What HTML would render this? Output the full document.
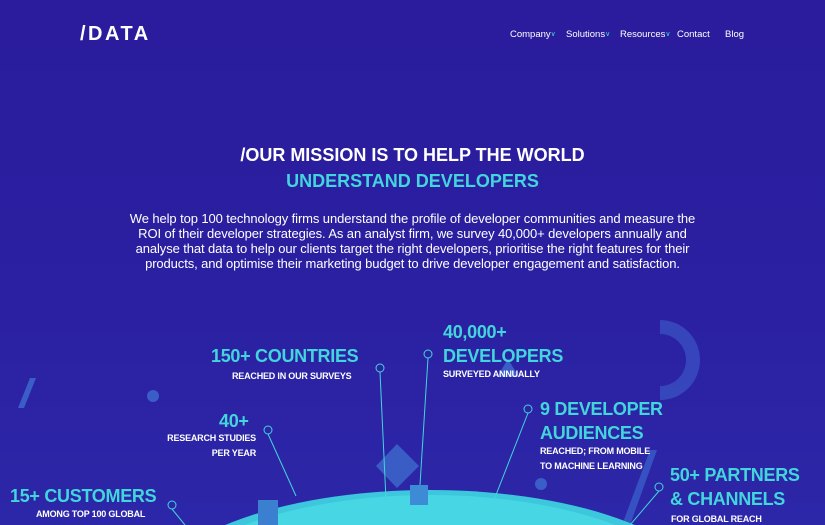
<!DOCTYPE html><html><head><style>
html,body{margin:0;width:825px;height:525px;overflow:hidden}
body{background:linear-gradient(180deg,#2a1c9c 0%,#2b20a2 60%,#2c27a8 100%);font-family:"Liberation Sans",sans-serif;position:relative}
.a{position:absolute;white-space:nowrap}
.c{color:#43d5dc;font-weight:bold;font-size:18px;letter-spacing:-0.3px;line-height:24px}
.w{color:#fff;font-weight:bold;font-size:9px;line-height:15px;letter-spacing:-0.2px}
.nav{color:#fff;font-size:9.5px;top:29px}
.nav i{color:#43d5dc;font-style:normal;font-size:7px;position:relative;top:-1px}
</style></head><body>
<div class="a" style="left:80px;top:23px;color:#fff;font-weight:bold;font-size:20px;letter-spacing:2.5px">/DATA</div>
<div class="a nav" style="left:510px">Company<i>&#8744;</i></div>
<div class="a nav" style="left:566px">Solutions<i>&#8744;</i></div>
<div class="a nav" style="left:620px">Resources<i>&#8744;</i></div>
<div class="a nav" style="left:677px">Contact</div>
<div class="a nav" style="left:725px">Blog</div>
<div class="a" style="left:0;width:825px;text-align:center;top:145px;color:#fff;font-weight:bold;font-size:18px">/OUR MISSION IS TO HELP THE WORLD</div>
<div class="a" style="left:0;width:825px;text-align:center;top:171px;color:#43d5dc;font-weight:bold;font-size:18px">UNDERSTAND DEVELOPERS</div>
<div class="a" style="left:123px;width:579px;top:211px;color:#fff;font-size:13px;line-height:15px;text-align:center;white-space:normal;letter-spacing:-0.1px">We help top 100 technology firms understand the profile of developer communities and measure the ROI of their developer strategies. As an analyst firm, we survey 40,000+ developers annually and analyse that data to help our clients target the right developers, prioritise the right features for their products, and optimise their marketing budget to drive developer engagement and satisfaction.</div>
<svg class="a" style="left:0;top:300px" width="825" height="225">
<path d="M660 20 A40 40 0 0 1 660 100 L660 86 A26 26 0 0 0 660 34Z" fill="#3a4fc0" opacity=".8"/>
<polygon points="24,16 30,16 18,46 12,46" fill="#3a5dc8" transform="translate(6,62)"/>
<polygon points="497,77 508,59 519,77" fill="#3a5dc8"/>
<polygon points="397,144 419,166 397,188 376,166" fill="#3d6ccc" opacity=".8"/>
<circle cx="153" cy="96" r="6" fill="#3a5dc8"/><circle cx="541" cy="184" r="6" fill="#3a5dc8"/>
<polygon points="650,150 657,150 630,225 622,225" fill="#3a5dc8" opacity=".8"/>
<ellipse cx="430" cy="300" rx="280" ry="110" fill="#3cc7dc"/>
<ellipse cx="430" cy="305" rx="270" ry="110" fill="#4de0ea" opacity=".6"/>
<rect x="258" y="200" width="20" height="25" fill="#3a7fd0"/><rect x="410" y="185" width="18" height="20" fill="#3d8ad6"/>
<g stroke="#43d5dc" fill="none" stroke-width="1">
<circle cx="380" cy="68" r="4"/><line x1="380" y1="72" x2="386" y2="200"/>
<circle cx="428" cy="54" r="4"/><line x1="428" y1="58" x2="420" y2="185"/>
<circle cx="268" cy="130" r="4"/><line x1="268" y1="134" x2="296" y2="196"/>
<circle cx="528" cy="109" r="4"/><line x1="528" y1="113" x2="494" y2="200"/>
<circle cx="659" cy="187" r="4"/><line x1="659" y1="191" x2="630" y2="225"/>
<circle cx="172" cy="205" r="4"/><line x1="172" y1="209" x2="185" y2="225"/>
</g></svg>
<div class="a c" style="left:211px;top:344px">150+ COUNTRIES</div>
<div class="a w" style="left:232px;top:369px">REACHED IN OUR SURVEYS</div>
<div class="a c" style="left:443px;top:320px">40,000+<br>DEVELOPERS</div>
<div class="a w" style="left:443px;top:367px">SURVEYED ANNUALLY</div>
<div class="a c" style="left:219px;top:409px">40+</div>
<div class="a w" style="left:159px;top:431px;text-align:right;width:97px">RESEARCH STUDIES<br>PER YEAR</div>
<div class="a c" style="left:540px;top:397px">9 DEVELOPER<br>AUDIENCES</div>
<div class="a w" style="left:540px;top:444px">REACHED; FROM MOBILE<br>TO MACHINE LEARNING</div>
<div class="a c" style="left:10px;top:484px">15+ CUSTOMERS</div>
<div class="a w" style="left:36px;top:507px">AMONG TOP 100 GLOBAL</div>
<div class="a c" style="left:670px;top:463px">50+ PARTNERS<br>&amp; CHANNELS</div>
<div class="a w" style="left:671px;top:512px">FOR GLOBAL REACH</div>
</body></html>
